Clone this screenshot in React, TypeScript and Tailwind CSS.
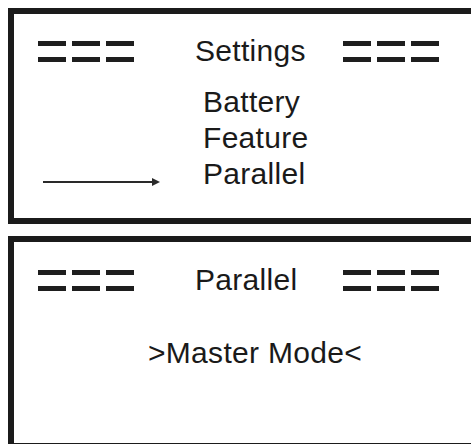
import React from "react";

const font = { fontFamily: '"Liberation Sans", Arial, sans-serif' };

function Dashes() {
  const row = (
    <div className="flex gap-[6px]">
      <div className="h-[5px] w-[28px] bg-[#1e1e1e]" />
      <div className="h-[5px] w-[28px] bg-[#1e1e1e]" />
      <div className="h-[5px] w-[28px] bg-[#1e1e1e]" />
    </div>
  );
  return (
    <div className="flex flex-col gap-[11px]">
      {row}
      {row}
    </div>
  );
}

function Header({ title }: { title: string }) {
  return (
    <div className="flex h-[36px] items-center">
      <div className="ml-[24px] w-[98px]">
        <Dashes />
      </div>
      <div className="ml-[59px] w-[148px] text-[30px] leading-[36px] tracking-[0.3px]">
        {title}
      </div>
      <Dashes />
    </div>
  );
}

function Arrow() {
  return (
    <svg width="118" height="10" viewBox="0 0 118 10" className="mt-[21px] ml-[29px]">
      <line x1="0" y1="5" x2="110" y2="5" stroke="#2a2a2a" strokeWidth="2" />
      <path d="M109 1 L117 5 L109 9 Z" fill="#2a2a2a" />
    </svg>
  );
}

const items = ["Battery", "Feature", "Parallel"];

export default function App() {
  return (
    <div className="h-[444px] w-[471px] overflow-hidden bg-white text-[#1a1a1a]" style={font}>
      <div className="ml-[8px] mt-[8px] h-[216px] w-[480px] border-[6px] border-[#1b1b1b] pt-[19px]">
        <Header title="Settings" />
        <div className="mt-[15px] grid grid-cols-[189px_1fr]">
          {items.map((item, i) => (
            <React.Fragment key={item}>
              <div className="flex h-[36px] items-start">
                {i === items.length - 1 && <Arrow />}
              </div>
              <div className="text-[30px] leading-[36px] tracking-[0.3px]">{item}</div>
            </React.Fragment>
          ))}
        </div>
      </div>
      <div className="ml-[8px] mt-[12px] h-[213px] w-[480px] border-[6px] border-[#1b1b1b] pt-[20px]">
        <Header title="Parallel" />
        <div className="mt-[37px] pl-[134px] text-[30px] leading-[36px] tracking-[0.3px]">
          &gt;Master Mode&lt;
        </div>
      </div>
    </div>
  );
}
